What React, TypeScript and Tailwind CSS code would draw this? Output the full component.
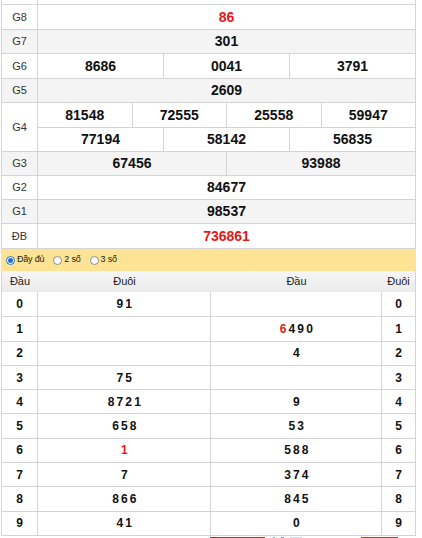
import React from "react";

const bd = "border-[#d4d4d4]";

type Cell = { text: string; red?: boolean };

// inner row heights; the outer border-b adds 1px to each prize row
const prizes: { label: string; rows: string[][]; gray?: boolean; red?: boolean; hs: string[] }[] = [
  { label: "G8", rows: [["86"]], red: true, hs: ["h-[24px]"] },
  { label: "G7", rows: [["301"]], gray: true, hs: ["h-[23px]"] },
  { label: "G6", rows: [["8686", "0041", "3791"]], hs: ["h-[24px]"] },
  { label: "G5", rows: [["2609"]], gray: true, hs: ["h-[23px]"] },
  { label: "G4", rows: [["81548", "72555", "25558", "59947"], ["77194", "58142", "56835"]], hs: ["h-[24px]", "h-[24px]"] },
  { label: "G3", rows: [["67456", "93988"]], gray: true, hs: ["h-[23px]"] },
  { label: "G2", rows: [["84677"]], hs: ["h-[23px]"] },
  { label: "G1", rows: [["98537"]], gray: true, hs: ["h-[23px]"] },
  { label: "ĐB", rows: [["736861"]], red: true, hs: ["h-[24px]"] },
];

const left: Cell[][] = [
  [{ text: "9 1" }],
  [],
  [],
  [{ text: "7 5" }],
  [{ text: "8 7 2 1" }],
  [{ text: "6 5 8" }],
  [{ text: "1", red: true }],
  [{ text: "7" }],
  [{ text: "8 6 6" }],
  [{ text: "4 1" }],
];

const right: Cell[][] = [
  [],
  [{ text: "6", red: true }, { text: " 4 9 0" }],
  [{ text: "4" }],
  [],
  [{ text: "9" }],
  [{ text: "5 3" }],
  [{ text: "5 8 8" }],
  [{ text: "3 7 4" }],
  [{ text: "8 4 5" }],
  [{ text: "0" }],
];

function Digits({ cells }: { cells: Cell[] }) {
  return (
    <span className="text-[12px] font-bold tracking-[-0.6px] whitespace-pre">
      {cells.map((c, i) => (
        <span key={i} className={c.red ? "text-[#e4181b]" : "text-[#111]"}>
          {c.text}
        </span>
      ))}
    </span>
  );
}

function Radio({ on, label }: { on?: boolean; label: string }) {
  return (
    <label className="flex items-center gap-[2px]">
      <span
        className={`w-[9px] h-[9px] rounded-full border flex items-center justify-center bg-white ${
          on ? "border-[#1a6fd6]" : "border-[#8a8a8a]"
        }`}
      >
        {on && <span className="w-[5px] h-[5px] rounded-full bg-[#1a6fd6]" />}
      </span>
      <span className="text-[9px] text-[#222] tracking-[-0.2px]">{label}</span>
    </label>
  );
}

export default function App() {
  return (
    <div
      className="w-[422px] h-[538px] overflow-hidden bg-white"
      style={{ fontFamily: '"Liberation Sans", Arial, sans-serif' }}
    >
      <div className="ml-[1px] w-[415px]">
        {/* results table */}
        <div className={`border-l border-r ${bd}`}>
          <div className={`flex h-[5px] border-b ${bd}`}>
            <div className={`w-[36px] border-r ${bd}`} />
            <div className="flex-1" />
          </div>
          {prizes.map((p) => (
            <div key={p.label} className={`flex border-b ${bd} ${p.gray ? "bg-[#f4f4f4]" : "bg-white"}`}>
              <div className={`w-[36px] shrink-0 border-r ${bd} flex items-center justify-center text-[11px] text-[#333]`}>
                {p.label}
              </div>
              <div className="flex-1 flex flex-col">
                {p.rows.map((r, ri) => (
                  <div key={ri} className={`flex ${p.hs[ri]} ${ri > 0 ? `border-t ${bd}` : ""}`}>
                    {r.map((n, ni) => (
                      <div
                        key={ni}
                        className={`flex-1 flex items-center justify-center text-[14px] font-bold ${
                          ni > 0 ? `border-l ${bd}` : ""
                        } ${p.red ? "text-[#e4181b]" : "text-[#111]"}`}
                      >
                        {n}
                      </div>
                    ))}
                  </div>
                ))}
              </div>
            </div>
          ))}
        </div>

        {/* filter bar */}
        <div className="h-[22px] bg-[#fee394] flex items-center gap-[9px] pl-[5px]">
          <Radio on label="Đầy đủ" />
          <Radio label="2 số" />
          <Radio label="3 số" />
        </div>

        {/* loto table */}
        <div className={`border-l border-r border-b ${bd}`}>
          <div className="flex h-[21px] bg-gradient-to-b from-[#f6f6f6] to-[#ebebeb] text-[11px] text-[#222]">
            <div className="w-[36px] flex items-center justify-center">Đầu</div>
            <div className="w-[173px] flex items-center justify-center">Đuôi</div>
            <div className="flex-1 flex items-center justify-center">Đầu</div>
            <div className="w-[33px] flex items-center justify-center">Đuôi</div>
          </div>
          {left.map((l, i) => (
            <div key={i} className={`flex h-[24.3px] ${i > 0 ? `border-t ${bd}` : ""}`}>
              <div className={`w-[36px] border-r ${bd} flex items-center justify-center text-[12px] font-bold text-[#111]`}>
                {i}
              </div>
              <div className={`w-[173px] border-r ${bd} flex items-center justify-center`}>
                <Digits cells={l} />
              </div>
              <div className={`flex-1 border-r ${bd} flex items-center justify-center`}>
                <Digits cells={right[i]} />
              </div>
              <div className="w-[33px] flex items-center justify-center text-[12px] font-bold text-[#111]">{i}</div>
            </div>
          ))}
        </div>

        {/* ad strip peeking in */}
        <div className="flex h-[3px] mt-[1px]">
          <div className="w-[209px]" />
          <div className="w-[55px] bg-[#e11b1b]" />
          <div className="w-[96px] flex gap-[6px] items-center pl-[8px]">
            <span className="w-[2px] h-[2px] bg-[#6aa3d8]" />
            <span className="w-[3px] h-[2px] bg-[#6aa3d8]" />
            <span className="w-[12px] h-[2px] bg-[#c9d9ea]" />
          </div>
          <div className="w-[37px] bg-[#e0301b]" />
        </div>
      </div>
    </div>
  );
}
